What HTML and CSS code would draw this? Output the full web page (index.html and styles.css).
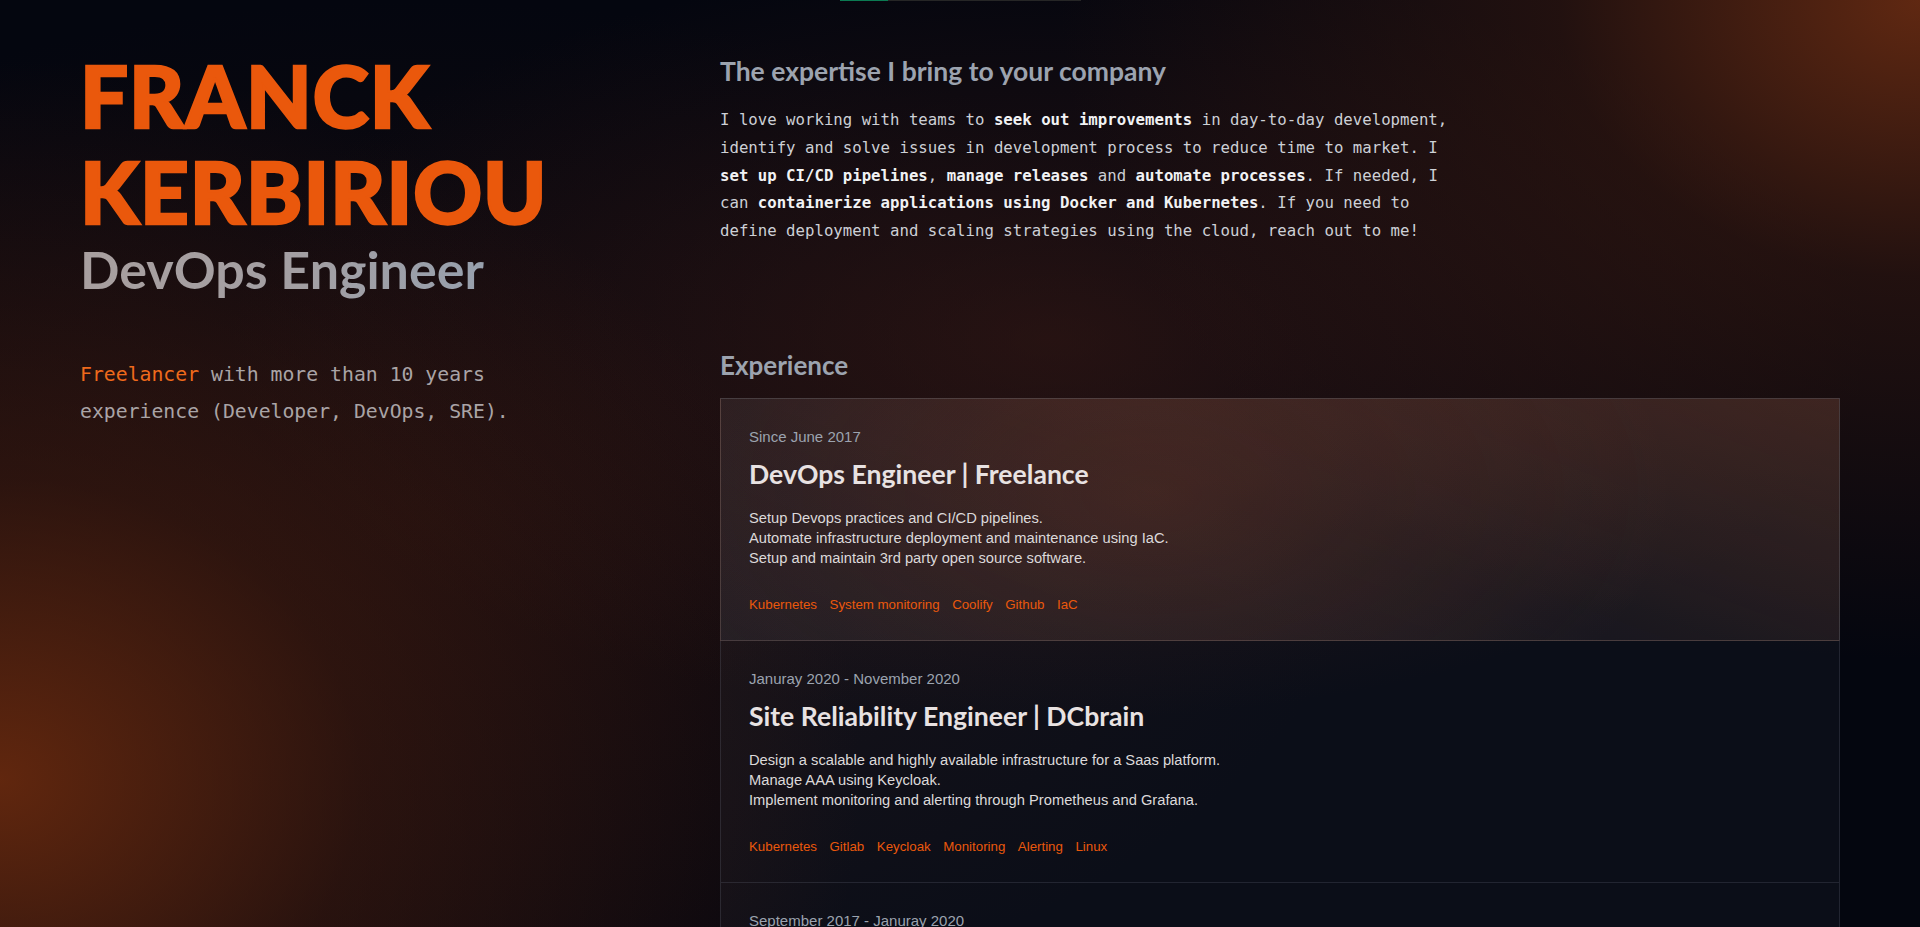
FILE: index.html
```html
<!DOCTYPE html>
<html lang="en">
<head>
<meta charset="utf-8">
<title>Franck Kerbiriou - DevOps Engineer</title>
<link rel="stylesheet" href="styles.css">
</head>
<body>
<div class="progress"><div class="progress-fill"></div></div>
<div class="page">
  <header class="intro">
    <h1 class="name">FRANCK<br>KERBIRIOU</h1>
    <h2 class="role">DevOps Engineer</h2>
    <p class="tagline"><span class="accent">Freelancer</span> with more than 10 years experience (Developer, DevOps, SRE).</p>
  </header>
  <main class="content">
    <section class="about">
      <h3 class="section-title">The expertise I bring to your company</h3>
      <p class="about-text">I love working with teams to <b>seek out improvements</b> in day-to-day development, identify and solve issues in development process to reduce time to market. I <b>set up CI/CD pipelines</b>, <b>manage releases</b> and <b>automate processes</b>. If needed, I can <b>containerize applications using Docker and Kubernetes</b>. If you need to define deployment and scaling strategies using the cloud, reach out to me!</p>
    </section>
    <section class="experience">
      <h3 class="section-title exp-title">Experience</h3>
      <div class="cards">
        <article class="card card-active">
          <div class="card-date">Since June 2017</div>
          <h4 class="card-title">DevOps Engineer | Freelance</h4>
          <p class="card-desc">Setup Devops practices and CI/CD pipelines.<br>Automate infrastructure deployment and maintenance using IaC.<br>Setup and maintain 3rd party open source software.</p>
          <ul class="tags">
            <li>Kubernetes</li><li>System monitoring</li><li>Coolify</li><li>Github</li><li>IaC</li>
          </ul>
        </article>
        <article class="card">
          <div class="card-date">Januray 2020 - November 2020</div>
          <h4 class="card-title">Site Reliability Engineer | DCbrain</h4>
          <p class="card-desc">Design a scalable and highly available infrastructure for a Saas platform.<br>Manage AAA using Keycloak.<br>Implement monitoring and alerting through Prometheus and Grafana.</p>
          <ul class="tags">
            <li>Kubernetes</li><li>Gitlab</li><li>Keycloak</li><li>Monitoring</li><li>Alerting</li><li>Linux</li>
          </ul>
        </article>
        <article class="card">
          <div class="card-date">September 2017 - Januray 2020</div>
          <h4 class="card-title">DevOps Engineer | DCbrain</h4>
          <p class="card-desc">Build and maintain CI/CD pipelines.<br>Deploy and operate the platform on the cloud.<br>Automate releases and environments.</p>
          <ul class="tags">
            <li>Docker</li><li>Gitlab CI</li><li>Ansible</li><li>Linux</li>
          </ul>
        </article>
      </div>
    </section>
  </main>
</div>
</body>
</html>
```

FILE: styles.css
```css
* { box-sizing: border-box; }

html, body {
  margin: 0;
  padding: 0;
}

body {
  min-height: 927px;
  background-color: #04060f;
  background-image:
    radial-gradient(ellipse 860px 720px at 0px 780px, rgba(112, 44, 14, 0.85) 0%, rgba(80, 32, 14, 0.45) 42%, rgba(4, 6, 15, 0) 100%),
    radial-gradient(ellipse 860px 660px at 1920px 0px, rgba(112, 46, 18, 0.85) 0%, rgba(70, 30, 16, 0.45) 42%, rgba(4, 6, 15, 0) 100%),
    radial-gradient(ellipse 820px 380px at 1050px 340px, rgba(75, 32, 22, 0.45) 0%, rgba(4, 6, 15, 0) 100%),
    radial-gradient(ellipse 950px 520px at 420px 520px, rgba(45, 20, 16, 0.4) 0%, rgba(4, 6, 15, 0) 100%);
  background-repeat: no-repeat;
  color: #d1d5db;
  font-family: "Liberation Sans", Arial, sans-serif;
}

.progress {
  position: fixed;
  top: 0;
  left: 840px;
  width: 241px;
  height: 1px;
  background: #262626;
}
.progress-fill {
  width: 48px;
  height: 100%;
  background: #0b7a52;
}

.page {
  display: grid;
  grid-template-columns: 640px 1fr;
  padding: 0 80px 0 80px;
}

/* ---------- intro (left column) ---------- */
.intro {
  padding-top: 47px;
}

.name {
  margin: 0;
  font-family: "Lato", "Liberation Sans", sans-serif;
  font-weight: 900;
  font-size: 85px;
  line-height: 96px;
  letter-spacing: 1px;
  color: #ea580c;
  -webkit-text-stroke: 2.5px #ea580c;
}

.role {
  margin: 0;
  font-family: "Lato", "Liberation Sans", sans-serif;
  font-weight: 700;
  font-size: 52px;
  line-height: 60px;
  display: inline-block;
  background: linear-gradient(90deg, #a89f9f 0%, #a39fa3 55%, #97a0ad 100%);
  -webkit-background-clip: text;
  background-clip: text;
  color: transparent;
}

.tagline {
  margin: 58px 0 0;
  width: 470px;
  font-family: "DejaVu Sans Mono", "Liberation Mono", monospace;
  font-size: 19.8px;
  line-height: 36.5px;
  color: #aaa4a6;
}

.accent {
  color: #ef6a1c;
}

/* ---------- content (right column) ---------- */
.content {
  padding-top: 53px;
}

.section-title {
  margin: 0;
  font-family: "Lato", "Liberation Sans", sans-serif;
  font-weight: 700;
  font-size: 26.5px;
  line-height: 36px;
  color: #9ca3af;
}

.about-text {
  margin: 17px 0 0;
  max-width: 78ch;
  font-family: "DejaVu Sans Mono", "Liberation Mono", monospace;
  font-size: 15.7px;
  line-height: 27.75px;
  color: #cdd0d6;
}
.about-text b {
  font-weight: 700;
  color: #f1f2f4;
}

.experience {
  margin-top: 104px;
}

.exp-title {
  font-size: 26px;
  line-height: 32px;
}

.cards {
  margin-top: 17px;
  display: flex;
  flex-direction: column;
}

.card {
  border: 1px solid rgba(120, 125, 140, 0.22);
  padding: 28px 28px 25px;
  background: rgba(148, 163, 184, 0.055);
}
.card + .card {
  border-top: none;
}

.card-active {
  background:
    radial-gradient(ellipse 520px 300px at 430px 95px, rgba(150, 70, 40, 0.22) 0%, rgba(150, 70, 40, 0) 100%),
    linear-gradient(200deg, rgba(110, 60, 45, 0.35) 0%, rgba(60, 45, 50, 0.2) 50%, rgba(40, 42, 55, 0.35) 100%),
    rgba(160, 160, 170, 0.08);
  border-color: rgba(140, 130, 130, 0.3);
}

.card-date {
  font-size: 15px;
  line-height: 20px;
  color: #9ca3af;
}

.card-title {
  margin: 11px 0 0;
  font-family: "Lato", "Liberation Sans", sans-serif;
  font-weight: 700;
  font-size: 26.6px;
  line-height: 32px;
  color: #e8e2e2;
}

.card-desc {
  margin: 18px 0 0;
  font-size: 14.7px;
  line-height: 20px;
  color: #dcd9da;
}

.tags {
  list-style: none;
  margin: 27px 0 0;
  padding: 0;
  display: flex;
  flex-wrap: wrap;
  gap: 12.5px;
  font-size: 13.3px;
  line-height: 20px;
  color: #ea580c;
}
```
